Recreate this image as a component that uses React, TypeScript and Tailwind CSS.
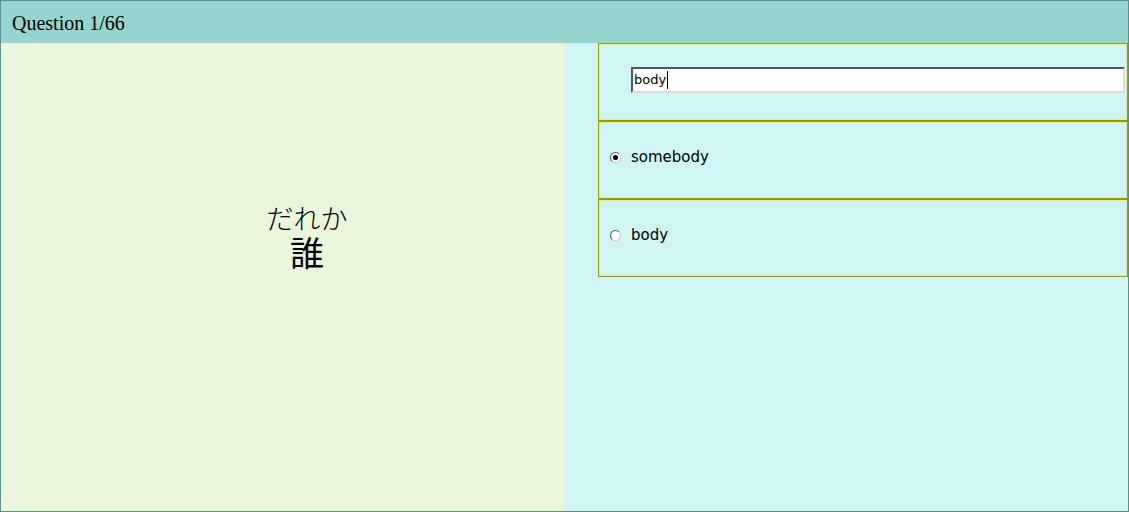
export default function App() {
  const box =
    "h-[78px] border border-[#999900] shadow-[inset_0_0_0_1px_#eaea90] flex items-center";
  return (
    <div className="w-[1129px] h-[512px] border border-[#5e8e8a] flex flex-col overflow-hidden">
      <div
        className="h-[42px] shrink-0 bg-[#96d5cf] flex items-center pl-[11px] pt-[1px] text-[20px] text-black"
        style={{ fontFamily: '"Liberation Serif", serif' }}
      >
        Question 1/66
      </div>
      <div className="flex flex-1">
        <div
          className="w-[564px] bg-[#e9f6dc] flex flex-col items-center justify-center pl-[48px] pb-[82px] text-black"
          style={{ fontFamily: '"Noto Sans CJK JP", sans-serif' }}
        >
          <div className="text-[27px] leading-[31px] font-light">だれか</div>
          <div className="text-[34px] leading-[38px]">誰</div>
        </div>
        <div className="flex-1 bg-[#cff6f4] pl-[33px]">
          <div className={box + " pl-[32px] pr-[2px] pb-[4px]"}>
            <div className="w-full h-[26px] bg-white border-2 border-t-[#555] border-l-[#555] border-b-[#ddd] border-r-[#ddd] flex items-center pl-[1px] text-[13px] text-black" style={{ fontFamily: '"DejaVu Sans", sans-serif' }}>
              body<span className="inline-block w-[1px] h-[18px] bg-black ml-[1px]" />
            </div>
          </div>
          <div className={box + " pl-[11px] pb-[5px]"} style={{ fontFamily: '"DejaVu Sans", sans-serif' }}>
            <span className="w-[11px] h-[11px] rounded-full border border-t-[#555] border-l-[#555] border-b-[#ccc] border-r-[#ccc] bg-white flex items-center justify-center">
              <span className="w-[5px] h-[5px] rounded-full bg-black" />
            </span>
            <span className="ml-[10px] text-[15px] text-black">somebody</span>
          </div>
          <div className={box + " pl-[11px] pb-[5px]"} style={{ fontFamily: '"DejaVu Sans", sans-serif' }}>
            <span className="w-[11px] h-[11px] rounded-full border border-t-[#555] border-l-[#555] border-b-[#ccc] border-r-[#ccc] bg-white" />
            <span className="ml-[10px] text-[15px] text-black">body</span>
          </div>
        </div>
      </div>
    </div>
  );
}
